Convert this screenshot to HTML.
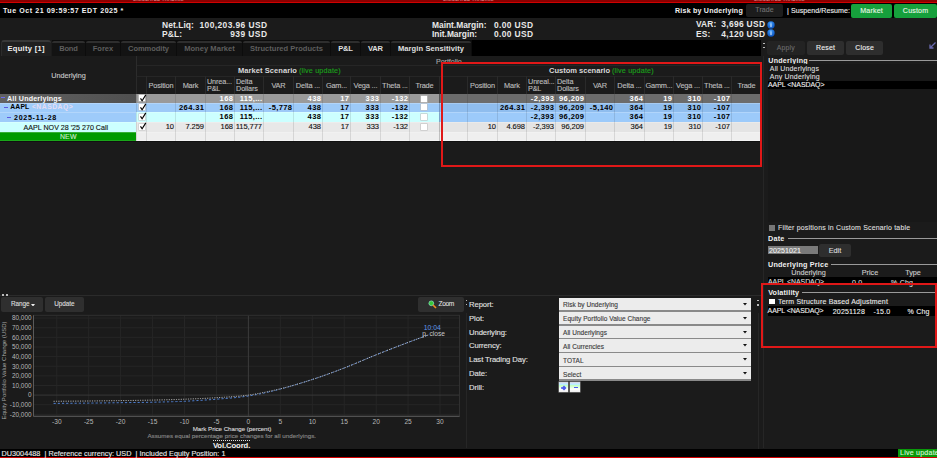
<!DOCTYPE html>
<html><head><meta charset="utf-8"><style>
html,body{margin:0;padding:0;background:#1b1b1b;width:937px;height:458px;overflow:hidden;}
.a{position:absolute;}
.t{font-family:"Liberation Sans",sans-serif;white-space:nowrap;}
.tn{-webkit-text-stroke:0.12px currentColor;}
.tb{}
</style></head><body>
<div class="a" style="left:0px;top:0px;width:937px;height:18px;background:#000;"></div>
<div class="a" style="left:0px;top:0px;width:937px;height:2px;background:#8a0000;"></div>
<div class="a" style="left:0px;top:2px;width:937px;height:1px;background:#d00000;"></div>
<div class="a t tn" style="left:133.00px;top:-2.18px;font-size:4.56px;line-height:4.56px;font-weight:normal;color:#d88;letter-spacing:0.153px;letter-spacing:0.2px;">SIMULATED TRADING</div>
<div class="a t tn" style="left:443.00px;top:-2.18px;font-size:4.56px;line-height:4.56px;font-weight:normal;color:#d88;letter-spacing:0.153px;letter-spacing:0.2px;">SIMULATED TRADING</div>
<div class="a t tn" style="left:754.00px;top:-2.18px;font-size:4.56px;line-height:4.56px;font-weight:normal;color:#d88;letter-spacing:0.153px;letter-spacing:0.2px;">SIMULATED TRADING</div>
<div class="a t tb" style="left:3.00px;top:7.95px;font-size:7.10px;line-height:7.10px;font-weight:bold;color:#f2f2f2;letter-spacing:0.538px;">Tue Oct 21 09:59:57 EDT 2025 *</div>
<div class="a t tb" style="left:675.00px;top:8.15px;font-size:7.10px;line-height:7.10px;font-weight:bold;color:#f2f2f2;letter-spacing:0.204px;">Risk by Underlying</div>
<div class="a" style="left:746px;top:4px;width:37px;height:13px;background:#1c1c1c;border-radius:2px;"></div>
<div class="a t tn" style="left:464.56px;width:600px;text-align:center;top:7.42px;font-size:6.96px;line-height:6.96px;font-weight:normal;color:#707070;letter-spacing:0.122px;">Trade</div>
<div class="a t tn" style="left:787.00px;top:7.95px;font-size:7.10px;line-height:7.10px;font-weight:normal;color:#eee;letter-spacing:0.048px;">| Suspend/Resume:</div>
<div class="a" style="left:851px;top:4px;width:41px;height:14px;background:#16a03c;border-radius:2px;"></div>
<div class="a t tn" style="left:571.58px;width:600px;text-align:center;top:7.65px;font-size:7.10px;line-height:7.10px;font-weight:normal;color:#e6f6e6;letter-spacing:0.151px;">Market</div>
<div class="a" style="left:894px;top:4px;width:43px;height:14px;background:#16a03c;border-radius:2px;"></div>
<div class="a t tn" style="left:615.58px;width:600px;text-align:center;top:7.65px;font-size:7.10px;line-height:7.10px;font-weight:normal;color:#e6f6e6;letter-spacing:0.169px;">Custom</div>
<div class="a" style="left:0px;top:18px;width:937px;height:22px;background:#1b1b1b;"></div>
<div class="a t tb" style="left:162.00px;top:20.60px;font-size:8.41px;line-height:8.41px;font-weight:bold;color:#e8e8e8;letter-spacing:0.086px;">Net.Liq:</div>
<div class="a t tb" style="right:669.59px;top:20.60px;font-size:8.41px;line-height:8.41px;font-weight:bold;color:#e8e8e8;letter-spacing:0.413px;">100,203.96 USD</div>
<div class="a t tb" style="left:162.00px;top:29.80px;font-size:8.41px;line-height:8.41px;font-weight:bold;color:#e8e8e8;letter-spacing:0.109px;">P&amp;L:</div>
<div class="a t tb" style="right:669.55px;top:29.80px;font-size:8.41px;line-height:8.41px;font-weight:bold;color:#e8e8e8;letter-spacing:0.453px;">939 USD</div>
<div class="a t tb" style="left:432.00px;top:20.60px;font-size:8.41px;line-height:8.41px;font-weight:bold;color:#e8e8e8;letter-spacing:-0.016px;">Maint.Margin:</div>
<div class="a t tb" style="right:403.62px;top:20.60px;font-size:8.41px;line-height:8.41px;font-weight:bold;color:#e8e8e8;letter-spacing:0.381px;">0.00 USD</div>
<div class="a t tb" style="left:432.00px;top:29.80px;font-size:8.41px;line-height:8.41px;font-weight:bold;color:#e8e8e8;letter-spacing:-0.013px;">Init.Margin:</div>
<div class="a t tb" style="right:403.62px;top:29.80px;font-size:8.41px;line-height:8.41px;font-weight:bold;color:#e8e8e8;letter-spacing:0.381px;">0.00 USD</div>
<div class="a t tb" style="left:696.00px;top:20.10px;font-size:8.41px;line-height:8.41px;font-weight:bold;color:#e8e8e8;letter-spacing:0.109px;">VAR:</div>
<div class="a t tb" style="right:171.68px;top:20.10px;font-size:8.41px;line-height:8.41px;font-weight:bold;color:#e8e8e8;letter-spacing:0.323px;">3,696 USD</div>
<div class="a t tb" style="left:696.00px;top:29.50px;font-size:8.41px;line-height:8.41px;font-weight:bold;color:#e8e8e8;letter-spacing:0.104px;">ES:</div>
<div class="a t tb" style="right:171.68px;top:29.50px;font-size:8.41px;line-height:8.41px;font-weight:bold;color:#e8e8e8;letter-spacing:0.323px;">4,120 USD</div>
<svg class="a" style="left:766.8px;top:20.60px" width="8" height="8" viewBox="0 0 8 8"><defs><radialGradient id="ig0" cx="0.45" cy="0.3" r="0.7"><stop offset="0" stop-color="#3a9cff"/><stop offset="1" stop-color="#0a4fb8"/></radialGradient></defs><circle cx="4" cy="4" r="3.7" fill="url(#ig0)"/><rect x="3.55" y="1.7" width="0.9" height="0.9" fill="#fff"/><rect x="3.55" y="3.1" width="0.9" height="3" fill="#fff"/></svg>
<svg class="a" style="left:766.8px;top:29.30px" width="8" height="8" viewBox="0 0 8 8"><defs><radialGradient id="ig1" cx="0.45" cy="0.3" r="0.7"><stop offset="0" stop-color="#3a9cff"/><stop offset="1" stop-color="#0a4fb8"/></radialGradient></defs><circle cx="4" cy="4" r="3.7" fill="url(#ig1)"/><rect x="3.55" y="1.7" width="0.9" height="0.9" fill="#fff"/><rect x="3.55" y="3.1" width="0.9" height="3" fill="#fff"/></svg>
<div class="a" style="left:0px;top:40px;width:937px;height:16px;background:#1b1b1b;"></div>
<div class="a" style="left:52px;top:40px;width:420px;height:16px;background:#0c0c0c;"></div>
<div class="a" style="left:1px;top:40px;width:50px;height:16px;background:#202020;border-top:2px solid #383838;border-left:1px solid #2c2c2c;border-radius:3px 3px 0 0;box-sizing:border-box;"></div>
<div class="a t tb" style="left:-273.86px;width:600px;text-align:center;top:44.93px;font-size:7.54px;line-height:7.54px;font-weight:bold;color:#f0f0f0;letter-spacing:0.289px;">Equity [1]</div>
<div class="a" style="left:52px;top:40.5px;width:33px;height:15.5px;background:#131313;border-top:2px solid #2e2e2e;border-radius:2px 2px 0 0;box-sizing:border-box;"></div>
<div class="a t tb" style="left:-231.61px;width:600px;text-align:center;top:44.93px;font-size:7.54px;line-height:7.54px;font-weight:bold;color:#5e5e5e;letter-spacing:-0.213px;">Bond</div>
<div class="a" style="left:86px;top:40.5px;width:34px;height:15.5px;background:#131313;border-top:2px solid #2e2e2e;border-radius:2px 2px 0 0;box-sizing:border-box;"></div>
<div class="a t tb" style="left:-197.00px;width:600px;text-align:center;top:44.93px;font-size:7.54px;line-height:7.54px;font-weight:bold;color:#5e5e5e;">Forex</div>
<div class="a" style="left:121px;top:40.5px;width:55px;height:15.5px;background:#131313;border-top:2px solid #2e2e2e;border-radius:2px 2px 0 0;box-sizing:border-box;"></div>
<div class="a t tb" style="left:-151.52px;width:600px;text-align:center;top:44.93px;font-size:7.54px;line-height:7.54px;font-weight:bold;color:#5e5e5e;letter-spacing:-0.047px;">Commodity</div>
<div class="a" style="left:177px;top:40.5px;width:65px;height:15.5px;background:#131313;border-top:2px solid #2e2e2e;border-radius:2px 2px 0 0;box-sizing:border-box;"></div>
<div class="a t tb" style="left:-90.48px;width:600px;text-align:center;top:44.93px;font-size:7.54px;line-height:7.54px;font-weight:bold;color:#5e5e5e;letter-spacing:0.039px;">Money Market</div>
<div class="a" style="left:243px;top:40.5px;width:87px;height:15.5px;background:#131313;border-top:2px solid #2e2e2e;border-radius:2px 2px 0 0;box-sizing:border-box;"></div>
<div class="a t tb" style="left:-13.50px;width:600px;text-align:center;top:44.93px;font-size:7.54px;line-height:7.54px;font-weight:bold;color:#5e5e5e;letter-spacing:0.010px;">Structured Products</div>
<div class="a" style="left:331px;top:40.5px;width:29px;height:15.5px;background:#131313;border-top:2px solid #2e2e2e;border-radius:2px 2px 0 0;box-sizing:border-box;"></div>
<div class="a t tb" style="left:45.39px;width:600px;text-align:center;top:44.93px;font-size:7.54px;line-height:7.54px;font-weight:bold;color:#e0e0e0;letter-spacing:-0.221px;">P&amp;L</div>
<div class="a" style="left:361px;top:40.5px;width:29px;height:15.5px;background:#131313;border-top:2px solid #2e2e2e;border-radius:2px 2px 0 0;box-sizing:border-box;"></div>
<div class="a t tb" style="left:75.44px;width:600px;text-align:center;top:44.93px;font-size:7.54px;line-height:7.54px;font-weight:bold;color:#e0e0e0;letter-spacing:-0.115px;">VAR</div>
<div class="a" style="left:391px;top:40.5px;width:80px;height:15.5px;background:#131313;border-top:2px solid #2e2e2e;border-radius:2px 2px 0 0;box-sizing:border-box;"></div>
<div class="a t tb" style="left:131.05px;width:600px;text-align:center;top:44.93px;font-size:7.54px;line-height:7.54px;font-weight:bold;color:#e0e0e0;letter-spacing:0.097px;">Margin Sensitivity</div>
<div class="a" style="left:472px;top:40px;width:289px;height:16px;background:#000;"></div>
<div class="a" style="left:767px;top:41.4px;width:37.5px;height:13.4px;background:#232323;border-radius:2px;"></div>
<div class="a t tn" style="left:485.84px;width:600px;text-align:center;top:44.63px;font-size:6.93px;line-height:6.93px;font-weight:normal;color:#6a6a6a;letter-spacing:0.188px;">Apply</div>
<div class="a" style="left:807px;top:41.4px;width:37px;height:13.4px;background:#2e2e2e;border-radius:2px;"></div>
<div class="a t tn" style="left:525.60px;width:600px;text-align:center;top:44.63px;font-size:6.93px;line-height:6.93px;font-weight:normal;color:#eee;letter-spacing:0.194px;">Reset</div>
<div class="a" style="left:846px;top:41.4px;width:37px;height:13.4px;background:#2e2e2e;border-radius:2px;"></div>
<div class="a t tn" style="left:564.60px;width:600px;text-align:center;top:44.63px;font-size:6.93px;line-height:6.93px;font-weight:normal;color:#eee;letter-spacing:0.191px;">Close</div>
<svg class="a" style="left:928px;top:41px" width="9" height="9" viewBox="0 0 9 9"><path d="M7.5 1.5 L2 7 M2 3.5 V7 H5.5" stroke="#6a6ab0" stroke-width="1.3" fill="none"/></svg>
<div class="a" style="left:763px;top:42.5px;width:1.6px;height:1.6px;background:#bbb;"></div>
<div class="a" style="left:763px;top:46.5px;width:1.6px;height:1.6px;background:#bbb;"></div>
<div class="a" style="left:0px;top:56px;width:761px;height:38px;background:#1b1b1b;"></div>
<div class="a" style="left:136px;top:56px;width:1px;height:38px;background:#2c2c2c;"></div>
<div class="a" style="left:137px;top:65px;width:624px;height:1px;background:#262626;"></div>
<div class="a" style="left:137px;top:75.5px;width:624px;height:1px;background:#262626;"></div>
<div class="a t tn" style="left:-231.52px;width:600px;text-align:center;top:71.68px;font-size:7.25px;line-height:7.25px;font-weight:normal;color:#c8c8c8;letter-spacing:-0.031px;">Underlying</div>
<div class="a t tn" style="left:436.00px;top:58.75px;font-size:7.10px;line-height:7.10px;font-weight:normal;color:#aaa;letter-spacing:-0.038px;">Portfolio</div>
<div class="a t tb" style="left:238.00px;top:67.23px;font-size:7.54px;line-height:7.54px;font-weight:bold;color:#d8d8d8;letter-spacing:0.054px;">Market Scenario</div>
<div class="a t tn" style="left:299.00px;top:67.39px;font-size:7.22px;line-height:7.22px;font-weight:normal;color:#1aa01a;letter-spacing:0.159px;">(live update)</div>
<div class="a t tb" style="left:549.00px;top:67.23px;font-size:7.54px;line-height:7.54px;font-weight:bold;color:#d8d8d8;letter-spacing:-0.007px;">Custom scenario</div>
<div class="a t tn" style="left:612.00px;top:67.39px;font-size:7.22px;line-height:7.22px;font-weight:normal;color:#1aa01a;letter-spacing:0.159px;">(live update)</div>
<div class="a" style="left:136px;top:75.5px;width:1px;height:18.5px;background:#2a2a2a;"></div>
<div class="a" style="left:146px;top:75.5px;width:1px;height:18.5px;background:#2a2a2a;"></div>
<div class="a" style="left:175px;top:75.5px;width:1px;height:18.5px;background:#2a2a2a;"></div>
<div class="a" style="left:205px;top:75.5px;width:1px;height:18.5px;background:#2a2a2a;"></div>
<div class="a" style="left:234px;top:75.5px;width:1px;height:18.5px;background:#2a2a2a;"></div>
<div class="a" style="left:263px;top:75.5px;width:1px;height:18.5px;background:#2a2a2a;"></div>
<div class="a" style="left:293px;top:75.5px;width:1px;height:18.5px;background:#2a2a2a;"></div>
<div class="a" style="left:322px;top:75.5px;width:1px;height:18.5px;background:#2a2a2a;"></div>
<div class="a" style="left:350px;top:75.5px;width:1px;height:18.5px;background:#2a2a2a;"></div>
<div class="a" style="left:380px;top:75.5px;width:1px;height:18.5px;background:#2a2a2a;"></div>
<div class="a" style="left:409px;top:75.5px;width:1px;height:18.5px;background:#2a2a2a;"></div>
<div class="a" style="left:439px;top:75.5px;width:1px;height:18.5px;background:#2a2a2a;"></div>
<div class="a t tn" style="left:-139.08px;width:600px;text-align:center;top:81.60px;font-size:7.39px;line-height:7.39px;font-weight:normal;color:#bdbdbd;letter-spacing:-0.168px;">Position</div>
<div class="a t tn" style="left:-109.60px;width:600px;text-align:center;top:81.60px;font-size:7.39px;line-height:7.39px;font-weight:normal;color:#bdbdbd;letter-spacing:-0.207px;">Mark</div>
<div class="a t tn" style="left:207.00px;top:77.68px;font-size:7.25px;line-height:7.25px;font-weight:normal;color:#bdbdbd;letter-spacing:-0.111px;">Unrea...</div>
<div class="a t tn" style="left:207.00px;top:85.38px;font-size:7.25px;line-height:7.25px;font-weight:normal;color:#bdbdbd;letter-spacing:-0.161px;">P&amp;L</div>
<div class="a t tn" style="left:236.00px;top:77.68px;font-size:7.25px;line-height:7.25px;font-weight:normal;color:#bdbdbd;letter-spacing:-0.119px;">Delta</div>
<div class="a t tn" style="left:236.00px;top:85.38px;font-size:7.25px;line-height:7.25px;font-weight:normal;color:#bdbdbd;letter-spacing:-0.109px;">Dollars</div>
<div class="a t tn" style="left:-21.62px;width:600px;text-align:center;top:81.60px;font-size:7.39px;line-height:7.39px;font-weight:normal;color:#bdbdbd;letter-spacing:-0.250px;">VAR</div>
<div class="a t tn" style="left:7.93px;width:600px;text-align:center;top:81.60px;font-size:7.39px;line-height:7.39px;font-weight:normal;color:#bdbdbd;letter-spacing:-0.144px;">Delta ...</div>
<div class="a t tn" style="left:36.41px;width:600px;text-align:center;top:81.60px;font-size:7.39px;line-height:7.39px;font-weight:normal;color:#bdbdbd;letter-spacing:-0.188px;">Gam...</div>
<div class="a t tn" style="left:65.42px;width:600px;text-align:center;top:81.60px;font-size:7.39px;line-height:7.39px;font-weight:normal;color:#bdbdbd;letter-spacing:-0.158px;">Vega ...</div>
<div class="a t tn" style="left:94.92px;width:600px;text-align:center;top:81.60px;font-size:7.39px;line-height:7.39px;font-weight:normal;color:#bdbdbd;letter-spacing:-0.153px;">Theta ...</div>
<div class="a t tn" style="left:124.40px;width:600px;text-align:center;top:81.60px;font-size:7.39px;line-height:7.39px;font-weight:normal;color:#bdbdbd;letter-spacing:-0.194px;">Trade</div>
<div class="a" style="left:439px;top:75.5px;width:1px;height:18.5px;background:#2a2a2a;"></div>
<div class="a" style="left:467px;top:75.5px;width:1px;height:18.5px;background:#2a2a2a;"></div>
<div class="a" style="left:497px;top:75.5px;width:1px;height:18.5px;background:#2a2a2a;"></div>
<div class="a" style="left:526px;top:75.5px;width:1px;height:18.5px;background:#2a2a2a;"></div>
<div class="a" style="left:555px;top:75.5px;width:1px;height:18.5px;background:#2a2a2a;"></div>
<div class="a" style="left:585px;top:75.5px;width:1px;height:18.5px;background:#2a2a2a;"></div>
<div class="a" style="left:614px;top:75.5px;width:1px;height:18.5px;background:#2a2a2a;"></div>
<div class="a" style="left:644px;top:75.5px;width:1px;height:18.5px;background:#2a2a2a;"></div>
<div class="a" style="left:673px;top:75.5px;width:1px;height:18.5px;background:#2a2a2a;"></div>
<div class="a" style="left:702px;top:75.5px;width:1px;height:18.5px;background:#2a2a2a;"></div>
<div class="a" style="left:731px;top:75.5px;width:1px;height:18.5px;background:#2a2a2a;"></div>
<div class="a" style="left:761px;top:75.5px;width:1px;height:18.5px;background:#2a2a2a;"></div>
<div class="a t tn" style="left:182.42px;width:600px;text-align:center;top:81.60px;font-size:7.39px;line-height:7.39px;font-weight:normal;color:#bdbdbd;letter-spacing:-0.168px;">Position</div>
<div class="a t tn" style="left:211.90px;width:600px;text-align:center;top:81.60px;font-size:7.39px;line-height:7.39px;font-weight:normal;color:#bdbdbd;letter-spacing:-0.207px;">Mark</div>
<div class="a t tn" style="left:528.00px;top:77.68px;font-size:7.25px;line-height:7.25px;font-weight:normal;color:#bdbdbd;letter-spacing:-0.104px;">Unreal...</div>
<div class="a t tn" style="left:528.00px;top:85.38px;font-size:7.25px;line-height:7.25px;font-weight:normal;color:#bdbdbd;letter-spacing:-0.161px;">P&amp;L</div>
<div class="a t tn" style="left:557.00px;top:77.68px;font-size:7.25px;line-height:7.25px;font-weight:normal;color:#bdbdbd;letter-spacing:-0.119px;">Delta</div>
<div class="a t tn" style="left:557.00px;top:85.38px;font-size:7.25px;line-height:7.25px;font-weight:normal;color:#bdbdbd;letter-spacing:-0.109px;">Dollars</div>
<div class="a t tn" style="left:299.88px;width:600px;text-align:center;top:81.60px;font-size:7.39px;line-height:7.39px;font-weight:normal;color:#bdbdbd;letter-spacing:-0.250px;">VAR</div>
<div class="a t tn" style="left:329.43px;width:600px;text-align:center;top:81.60px;font-size:7.39px;line-height:7.39px;font-weight:normal;color:#bdbdbd;letter-spacing:-0.144px;">Delta ...</div>
<div class="a t tn" style="left:358.90px;width:600px;text-align:center;top:81.60px;font-size:7.39px;line-height:7.39px;font-weight:normal;color:#bdbdbd;letter-spacing:-0.205px;">Gamm...</div>
<div class="a t tn" style="left:387.92px;width:600px;text-align:center;top:81.60px;font-size:7.39px;line-height:7.39px;font-weight:normal;color:#bdbdbd;letter-spacing:-0.158px;">Vega ...</div>
<div class="a t tn" style="left:416.92px;width:600px;text-align:center;top:81.60px;font-size:7.39px;line-height:7.39px;font-weight:normal;color:#bdbdbd;letter-spacing:-0.153px;">Theta ...</div>
<div class="a t tn" style="left:446.40px;width:600px;text-align:center;top:81.60px;font-size:7.39px;line-height:7.39px;font-weight:normal;color:#bdbdbd;letter-spacing:-0.194px;">Trade</div>
<div class="a" style="left:0px;top:94px;width:136px;height:9px;background:linear-gradient(to right,#626262,#505050);"></div>
<div class="a" style="left:0px;top:103px;width:136px;height:9px;background:#9ecbfa;"></div>
<div class="a" style="left:0px;top:112px;width:136px;height:10px;background:#9ecbfa;"></div>
<div class="a" style="left:0px;top:122px;width:136px;height:10px;background:#ccffff;"></div>
<div class="a" style="left:0px;top:132px;width:136px;height:9px;background:#009a00;"></div>
<div class="a" style="left:136px;top:94px;width:303px;height:9px;background:#9a9a9a;"></div>
<div class="a" style="left:439px;top:94px;width:322px;height:9px;background:#6c6c6c;"></div>
<div class="a" style="left:136px;top:103px;width:303px;height:9px;background:#9dcaf8;"></div>
<div class="a" style="left:439px;top:103px;width:322px;height:9px;background:#8fbdee;"></div>
<div class="a" style="left:136px;top:112px;width:303px;height:10px;background:#ccffff;"></div>
<div class="a" style="left:439px;top:112px;width:322px;height:10px;background:#9ccafa;"></div>
<div class="a" style="left:136px;top:122px;width:303px;height:10px;background:#e8e8e8;"></div>
<div class="a" style="left:439px;top:122px;width:322px;height:10px;background:#e4e4e4;"></div>
<div class="a" style="left:136px;top:132px;width:303px;height:9px;background:#eeeeee;"></div>
<div class="a" style="left:439px;top:132px;width:322px;height:9px;background:#efefef;"></div>
<div class="a" style="left:0px;top:103px;width:761px;height:1px;background:rgba(255,255,255,0.22);"></div>
<div class="a" style="left:0px;top:112px;width:761px;height:1px;background:rgba(255,255,255,0.22);"></div>
<div class="a" style="left:0px;top:122px;width:761px;height:1px;background:rgba(255,255,255,0.22);"></div>
<div class="a" style="left:0px;top:132px;width:761px;height:1px;background:rgba(255,255,255,0.22);"></div>
<div class="a" style="left:136px;top:140px;width:625px;height:1px;background:#f4f4f4;"></div>
<div class="a" style="left:0px;top:140px;width:136px;height:1px;background:#1aa61a;"></div>
<div class="a" style="left:0px;top:141px;width:761px;height:1px;background:#111;"></div>
<div class="a" style="left:136px;top:94px;width:1px;height:47px;background:rgba(0,0,0,0.1);"></div>
<div class="a" style="left:146px;top:94px;width:1px;height:47px;background:rgba(0,0,0,0.1);"></div>
<div class="a" style="left:175px;top:94px;width:1px;height:47px;background:rgba(0,0,0,0.1);"></div>
<div class="a" style="left:205px;top:94px;width:1px;height:47px;background:rgba(0,0,0,0.1);"></div>
<div class="a" style="left:234px;top:94px;width:1px;height:47px;background:rgba(0,0,0,0.1);"></div>
<div class="a" style="left:263px;top:94px;width:1px;height:47px;background:rgba(0,0,0,0.1);"></div>
<div class="a" style="left:293px;top:94px;width:1px;height:47px;background:rgba(0,0,0,0.1);"></div>
<div class="a" style="left:322px;top:94px;width:1px;height:47px;background:rgba(0,0,0,0.1);"></div>
<div class="a" style="left:350px;top:94px;width:1px;height:47px;background:rgba(0,0,0,0.1);"></div>
<div class="a" style="left:380px;top:94px;width:1px;height:47px;background:rgba(0,0,0,0.1);"></div>
<div class="a" style="left:409px;top:94px;width:1px;height:47px;background:rgba(0,0,0,0.1);"></div>
<div class="a" style="left:439px;top:94px;width:1px;height:47px;background:rgba(0,0,0,0.1);"></div>
<div class="a" style="left:439px;top:94px;width:1px;height:47px;background:rgba(0,0,0,0.1);"></div>
<div class="a" style="left:467px;top:94px;width:1px;height:47px;background:rgba(0,0,0,0.1);"></div>
<div class="a" style="left:497px;top:94px;width:1px;height:47px;background:rgba(0,0,0,0.1);"></div>
<div class="a" style="left:526px;top:94px;width:1px;height:47px;background:rgba(0,0,0,0.1);"></div>
<div class="a" style="left:555px;top:94px;width:1px;height:47px;background:rgba(0,0,0,0.1);"></div>
<div class="a" style="left:585px;top:94px;width:1px;height:47px;background:rgba(0,0,0,0.1);"></div>
<div class="a" style="left:614px;top:94px;width:1px;height:47px;background:rgba(0,0,0,0.1);"></div>
<div class="a" style="left:644px;top:94px;width:1px;height:47px;background:rgba(0,0,0,0.1);"></div>
<div class="a" style="left:673px;top:94px;width:1px;height:47px;background:rgba(0,0,0,0.1);"></div>
<div class="a" style="left:702px;top:94px;width:1px;height:47px;background:rgba(0,0,0,0.1);"></div>
<div class="a" style="left:731px;top:94px;width:1px;height:47px;background:rgba(0,0,0,0.1);"></div>
<div class="a" style="left:761px;top:94px;width:1px;height:47px;background:rgba(0,0,0,0.1);"></div>
<div class="a" style="left:0.7px;top:97.0px;width:4.2px;height:1.3px;background:#6a6af0;"></div>
<div class="a" style="left:4.1px;top:107.1px;width:3.9px;height:1.3px;background:#5a5ae0;"></div>
<div class="a" style="left:7.3px;top:116.6px;width:4.2px;height:1.3px;background:#5a5ae0;"></div>
<div class="a t tb" style="left:7.00px;top:95.95px;font-size:7.10px;line-height:7.10px;font-weight:bold;color:#fafafa;letter-spacing:0.199px;">All Underlyings</div>
<div class="a t tb" style="left:10.30px;top:104.09px;font-size:6.81px;line-height:6.81px;font-weight:bold;color:#000;letter-spacing:0.137px;">AAPL</div>
<div class="a t tb" style="left:31.90px;top:104.49px;font-size:6.81px;line-height:6.81px;font-weight:bold;color:#e6dcf2;letter-spacing:0.499px;">&lt;NASDAQ&gt;</div>
<div class="a t tb" style="left:14.00px;top:114.75px;font-size:7.10px;line-height:7.10px;font-weight:bold;color:#000;letter-spacing:0.711px;">2025-11-28</div>
<div class="a t tn" style="left:23.60px;top:124.55px;font-size:7.10px;line-height:7.10px;font-weight:normal;color:#111;letter-spacing:0.008px;">AAPL NOV 28 &#39;25 270 Call</div>
<div class="a t tn" style="left:-231.71px;width:600px;text-align:center;top:133.52px;font-size:6.96px;line-height:6.96px;font-weight:normal;color:#cfe9cf;letter-spacing:0.182px;">NEW</div>
<div class="a" style="left:139px;top:95px;width:6px;height:6px;background:#fff;box-shadow:0 0 0 0.6px #c8c8c8;"></div>
<svg class="a" style="left:138.5px;top:93.90px" width="8" height="8" viewBox="0 0 8 8"><path d="M1.5 4.4 L3.1 6.8 L6.8 0.9" stroke="#000" stroke-width="1.15" fill="none"/></svg>
<div class="a" style="left:139px;top:104px;width:6px;height:6px;background:#fff;box-shadow:0 0 0 0.6px #c8c8c8;"></div>
<svg class="a" style="left:138.5px;top:102.90px" width="8" height="8" viewBox="0 0 8 8"><path d="M1.5 4.4 L3.1 6.8 L6.8 0.9" stroke="#000" stroke-width="1.15" fill="none"/></svg>
<div class="a" style="left:139px;top:114px;width:6px;height:6px;background:#fff;box-shadow:0 0 0 0.6px #c8c8c8;"></div>
<svg class="a" style="left:138.5px;top:112.40px" width="8" height="8" viewBox="0 0 8 8"><path d="M1.5 4.4 L3.1 6.8 L6.8 0.9" stroke="#000" stroke-width="1.15" fill="none"/></svg>
<div class="a" style="left:139px;top:124px;width:6px;height:6px;background:#fff;box-shadow:0 0 0 0.6px #c8c8c8;"></div>
<svg class="a" style="left:138.5px;top:122.40px" width="8" height="8" viewBox="0 0 8 8"><path d="M1.5 4.4 L3.1 6.8 L6.8 0.9" stroke="#000" stroke-width="1.15" fill="none"/></svg>
<div class="a" style="left:421px;top:96px;width:6px;height:6px;background:#fff;box-shadow:0 0 0 0.6px #c0c0c0;"></div>
<div class="a" style="left:421px;top:104px;width:6px;height:6px;background:#fff;box-shadow:0 0 0 0.6px #c0c0c0;"></div>
<div class="a" style="left:421px;top:114px;width:6px;height:6px;background:#fff;box-shadow:0 0 0 0.6px #c0c0c0;"></div>
<div class="a" style="left:421px;top:124px;width:6px;height:6px;background:#fff;box-shadow:0 0 0 0.6px #c0c0c0;"></div>
<div class="a t tb" style="right:703.58px;top:95.43px;font-size:7.54px;line-height:7.54px;font-weight:bold;color:#fff;letter-spacing:0.422px;">168</div>
<div class="a t tb" style="right:674.70px;top:95.43px;font-size:7.54px;line-height:7.54px;font-weight:bold;color:#fff;letter-spacing:0.297px;">115,...</div>
<div class="a t tb" style="right:615.58px;top:95.43px;font-size:7.54px;line-height:7.54px;font-weight:bold;color:#fff;letter-spacing:0.422px;">438</div>
<div class="a t tb" style="right:587.58px;top:95.43px;font-size:7.54px;line-height:7.54px;font-weight:bold;color:#fff;letter-spacing:0.422px;">17</div>
<div class="a t tb" style="right:557.58px;top:95.43px;font-size:7.54px;line-height:7.54px;font-weight:bold;color:#fff;letter-spacing:0.422px;">333</div>
<div class="a t tb" style="right:528.62px;top:95.43px;font-size:7.54px;line-height:7.54px;font-weight:bold;color:#fff;letter-spacing:0.383px;">-132</div>
<div class="a t tb" style="right:732.61px;top:104.43px;font-size:7.54px;line-height:7.54px;font-weight:bold;color:#000;letter-spacing:0.391px;">264.31</div>
<div class="a t tb" style="right:703.58px;top:104.43px;font-size:7.54px;line-height:7.54px;font-weight:bold;color:#000;letter-spacing:0.422px;">168</div>
<div class="a t tb" style="right:674.70px;top:104.43px;font-size:7.54px;line-height:7.54px;font-weight:bold;color:#000;letter-spacing:0.297px;">115,...</div>
<div class="a t tb" style="right:644.64px;top:104.43px;font-size:7.54px;line-height:7.54px;font-weight:bold;color:#000;letter-spacing:0.362px;">-5,778</div>
<div class="a t tb" style="right:615.58px;top:104.43px;font-size:7.54px;line-height:7.54px;font-weight:bold;color:#000;letter-spacing:0.422px;">438</div>
<div class="a t tb" style="right:587.58px;top:104.43px;font-size:7.54px;line-height:7.54px;font-weight:bold;color:#000;letter-spacing:0.422px;">17</div>
<div class="a t tb" style="right:557.58px;top:104.43px;font-size:7.54px;line-height:7.54px;font-weight:bold;color:#000;letter-spacing:0.422px;">333</div>
<div class="a t tb" style="right:528.62px;top:104.43px;font-size:7.54px;line-height:7.54px;font-weight:bold;color:#000;letter-spacing:0.383px;">-132</div>
<div class="a t tb" style="right:703.58px;top:113.43px;font-size:7.54px;line-height:7.54px;font-weight:bold;color:#000;letter-spacing:0.422px;">168</div>
<div class="a t tb" style="right:674.70px;top:113.43px;font-size:7.54px;line-height:7.54px;font-weight:bold;color:#000;letter-spacing:0.297px;">115,...</div>
<div class="a t tb" style="right:615.58px;top:113.43px;font-size:7.54px;line-height:7.54px;font-weight:bold;color:#000;letter-spacing:0.422px;">438</div>
<div class="a t tb" style="right:587.58px;top:113.43px;font-size:7.54px;line-height:7.54px;font-weight:bold;color:#000;letter-spacing:0.422px;">17</div>
<div class="a t tb" style="right:557.58px;top:113.43px;font-size:7.54px;line-height:7.54px;font-weight:bold;color:#000;letter-spacing:0.422px;">333</div>
<div class="a t tb" style="right:528.62px;top:113.43px;font-size:7.54px;line-height:7.54px;font-weight:bold;color:#000;letter-spacing:0.383px;">-132</div>
<div class="a t tn" style="right:763.08px;top:123.43px;font-size:7.54px;line-height:7.54px;font-weight:normal;color:#111;letter-spacing:-0.078px;">10</div>
<div class="a t tn" style="right:733.07px;top:123.43px;font-size:7.54px;line-height:7.54px;font-weight:normal;color:#111;letter-spacing:-0.072px;">7.259</div>
<div class="a t tn" style="right:704.08px;top:123.43px;font-size:7.54px;line-height:7.54px;font-weight:normal;color:#111;letter-spacing:-0.078px;">168</div>
<div class="a t tn" style="right:675.07px;top:123.43px;font-size:7.54px;line-height:7.54px;font-weight:normal;color:#111;letter-spacing:-0.071px;">115,777</div>
<div class="a t tn" style="right:616.08px;top:123.43px;font-size:7.54px;line-height:7.54px;font-weight:normal;color:#111;letter-spacing:-0.078px;">438</div>
<div class="a t tn" style="right:588.08px;top:123.43px;font-size:7.54px;line-height:7.54px;font-weight:normal;color:#111;letter-spacing:-0.078px;">17</div>
<div class="a t tn" style="right:558.08px;top:123.43px;font-size:7.54px;line-height:7.54px;font-weight:normal;color:#111;letter-spacing:-0.078px;">333</div>
<div class="a t tn" style="right:529.07px;top:123.43px;font-size:7.54px;line-height:7.54px;font-weight:normal;color:#111;letter-spacing:-0.070px;">-132</div>
<div class="a t tb" style="right:382.64px;top:95.43px;font-size:7.54px;line-height:7.54px;font-weight:bold;color:#fff;letter-spacing:0.362px;">-2,393</div>
<div class="a t tb" style="right:352.61px;top:95.43px;font-size:7.54px;line-height:7.54px;font-weight:bold;color:#fff;letter-spacing:0.391px;">96,209</div>
<div class="a t tb" style="right:293.58px;top:95.43px;font-size:7.54px;line-height:7.54px;font-weight:bold;color:#fff;letter-spacing:0.422px;">364</div>
<div class="a t tb" style="right:264.58px;top:95.43px;font-size:7.54px;line-height:7.54px;font-weight:bold;color:#fff;letter-spacing:0.422px;">19</div>
<div class="a t tb" style="right:235.58px;top:95.43px;font-size:7.54px;line-height:7.54px;font-weight:bold;color:#fff;letter-spacing:0.422px;">310</div>
<div class="a t tb" style="right:206.62px;top:95.43px;font-size:7.54px;line-height:7.54px;font-weight:bold;color:#fff;letter-spacing:0.383px;">-107</div>
<div class="a t tb" style="right:411.61px;top:104.43px;font-size:7.54px;line-height:7.54px;font-weight:bold;color:#000;letter-spacing:0.391px;">264.31</div>
<div class="a t tb" style="right:382.64px;top:104.43px;font-size:7.54px;line-height:7.54px;font-weight:bold;color:#000;letter-spacing:0.362px;">-2,393</div>
<div class="a t tb" style="right:352.61px;top:104.43px;font-size:7.54px;line-height:7.54px;font-weight:bold;color:#000;letter-spacing:0.391px;">96,209</div>
<div class="a t tb" style="right:323.64px;top:104.43px;font-size:7.54px;line-height:7.54px;font-weight:bold;color:#000;letter-spacing:0.362px;">-5,140</div>
<div class="a t tb" style="right:293.58px;top:104.43px;font-size:7.54px;line-height:7.54px;font-weight:bold;color:#000;letter-spacing:0.422px;">364</div>
<div class="a t tb" style="right:264.58px;top:104.43px;font-size:7.54px;line-height:7.54px;font-weight:bold;color:#000;letter-spacing:0.422px;">19</div>
<div class="a t tb" style="right:235.58px;top:104.43px;font-size:7.54px;line-height:7.54px;font-weight:bold;color:#000;letter-spacing:0.422px;">310</div>
<div class="a t tb" style="right:206.62px;top:104.43px;font-size:7.54px;line-height:7.54px;font-weight:bold;color:#000;letter-spacing:0.383px;">-107</div>
<div class="a t tb" style="right:382.64px;top:113.43px;font-size:7.54px;line-height:7.54px;font-weight:bold;color:#000;letter-spacing:0.362px;">-2,393</div>
<div class="a t tb" style="right:352.61px;top:113.43px;font-size:7.54px;line-height:7.54px;font-weight:bold;color:#000;letter-spacing:0.391px;">96,209</div>
<div class="a t tb" style="right:293.58px;top:113.43px;font-size:7.54px;line-height:7.54px;font-weight:bold;color:#000;letter-spacing:0.422px;">364</div>
<div class="a t tb" style="right:264.58px;top:113.43px;font-size:7.54px;line-height:7.54px;font-weight:bold;color:#000;letter-spacing:0.422px;">19</div>
<div class="a t tb" style="right:235.58px;top:113.43px;font-size:7.54px;line-height:7.54px;font-weight:bold;color:#000;letter-spacing:0.422px;">310</div>
<div class="a t tb" style="right:206.62px;top:113.43px;font-size:7.54px;line-height:7.54px;font-weight:bold;color:#000;letter-spacing:0.383px;">-107</div>
<div class="a t tn" style="right:441.08px;top:123.43px;font-size:7.54px;line-height:7.54px;font-weight:normal;color:#111;letter-spacing:-0.078px;">10</div>
<div class="a t tn" style="right:412.07px;top:123.43px;font-size:7.54px;line-height:7.54px;font-weight:normal;color:#111;letter-spacing:-0.072px;">4.698</div>
<div class="a t tn" style="right:383.07px;top:123.43px;font-size:7.54px;line-height:7.54px;font-weight:normal;color:#111;letter-spacing:-0.065px;">-2,393</div>
<div class="a t tn" style="right:353.07px;top:123.43px;font-size:7.54px;line-height:7.54px;font-weight:normal;color:#111;letter-spacing:-0.073px;">96,209</div>
<div class="a t tn" style="right:294.08px;top:123.43px;font-size:7.54px;line-height:7.54px;font-weight:normal;color:#111;letter-spacing:-0.078px;">364</div>
<div class="a t tn" style="right:265.08px;top:123.43px;font-size:7.54px;line-height:7.54px;font-weight:normal;color:#111;letter-spacing:-0.078px;">19</div>
<div class="a t tn" style="right:236.08px;top:123.43px;font-size:7.54px;line-height:7.54px;font-weight:normal;color:#111;letter-spacing:-0.078px;">310</div>
<div class="a t tn" style="right:207.07px;top:123.43px;font-size:7.54px;line-height:7.54px;font-weight:normal;color:#111;letter-spacing:-0.070px;">-107</div>
<div class="a" style="left:0px;top:142px;width:761px;height:153px;background:#1b1b1b;"></div>
<div class="a" style="left:441px;top:62px;width:321px;height:104.6px;border:2px solid #e01818;box-sizing:border-box;"></div>
<div class="a" style="left:763px;top:56px;width:174px;height:392px;background:#1b1b1b;"></div>
<div class="a" style="left:762.6px;top:56px;width:1px;height:392px;background:#262626;"></div>
<div class="a t tb" style="left:768.30px;top:58.05px;font-size:7.10px;line-height:7.10px;font-weight:bold;color:#f0f0f0;letter-spacing:0.261px;">Underlying</div>
<div class="a" style="left:809px;top:59.6px;width:128px;height:1px;background:#9a9a9a;"></div>
<div class="a" style="left:768px;top:64px;width:169px;height:158px;background:#181818;"></div>
<div class="a t tn" style="left:769.80px;top:66.32px;font-size:6.96px;line-height:6.96px;font-weight:normal;color:#ddd;letter-spacing:0.195px;">All Underlyings</div>
<div class="a t tn" style="left:769.80px;top:74.32px;font-size:6.96px;line-height:6.96px;font-weight:normal;color:#ddd;letter-spacing:0.212px;">Any Underlying</div>
<div class="a" style="left:768px;top:81px;width:169px;height:8px;background:#000;"></div>
<div class="a t tn" style="left:768.00px;top:81.92px;font-size:6.96px;line-height:6.96px;font-weight:normal;color:#eee;letter-spacing:-0.035px;">AAPL &lt;NASDAQ&gt;</div>
<div class="a" style="left:769px;top:225px;width:6px;height:6px;background:#777;"></div>
<div class="a t tn" style="left:778.00px;top:225.02px;font-size:6.96px;line-height:6.96px;font-weight:normal;color:#ddd;letter-spacing:0.191px;">Filter positions in Custom Scenario table</div>
<div class="a t tb" style="left:768.00px;top:234.59px;font-size:7.22px;line-height:7.22px;font-weight:bold;color:#f0f0f0;letter-spacing:0.203px;">Date</div>
<div class="a" style="left:788px;top:237.6px;width:149px;height:1px;background:#9a9a9a;"></div>
<div class="a" style="left:768px;top:246px;width:50px;height:8px;background:#7a7a7a;"></div>
<div class="a t tn" style="left:769.00px;top:248.05px;font-size:7.10px;line-height:7.10px;font-weight:normal;color:#f0f0f0;letter-spacing:0.055px;">20251021</div>
<div class="a" style="left:819px;top:244px;width:32px;height:13px;background:#2e2e2e;border-radius:2px;"></div>
<div class="a t tn" style="left:535.01px;width:600px;text-align:center;top:246.88px;font-size:7.25px;line-height:7.25px;font-weight:normal;color:#ddd;letter-spacing:0.020px;">Edit</div>
<div class="a t tb" style="left:768.00px;top:260.59px;font-size:7.22px;line-height:7.22px;font-weight:bold;color:#f0f0f0;letter-spacing:0.187px;">Underlying Price</div>
<div class="a" style="left:831px;top:263.8px;width:106px;height:1px;background:#9a9a9a;"></div>
<div class="a t tn" style="left:508.48px;width:600px;text-align:center;top:268.88px;font-size:7.25px;line-height:7.25px;font-weight:normal;color:#ccc;letter-spacing:-0.031px;">Underlying</div>
<div class="a t tn" style="left:569.99px;width:600px;text-align:center;top:268.88px;font-size:7.25px;line-height:7.25px;font-weight:normal;color:#ccc;letter-spacing:-0.028px;">Price</div>
<div class="a t tn" style="left:612.98px;width:600px;text-align:center;top:268.88px;font-size:7.25px;line-height:7.25px;font-weight:normal;color:#ccc;letter-spacing:-0.031px;">Type</div>
<div class="a" style="left:768px;top:277px;width:169px;height:6px;background:#000;"></div>
<div class="a t tn" style="left:768.00px;top:279.32px;font-size:6.96px;line-height:6.96px;font-weight:normal;color:#ddd;letter-spacing:-0.073px;">AAPL &lt;NASDAQ&gt;</div>
<div class="a t tn" style="left:852.00px;top:279.29px;font-size:7.03px;line-height:7.03px;font-weight:normal;color:#ddd;letter-spacing:0.172px;">0.0</div>
<div class="a t tn" style="left:891.00px;top:279.29px;font-size:7.03px;line-height:7.03px;font-weight:normal;color:#ddd;letter-spacing:0.225px;">% Chg</div>
<div class="a t tb" style="left:768.20px;top:288.69px;font-size:7.22px;line-height:7.22px;font-weight:bold;color:#f0f0f0;letter-spacing:0.153px;">Volatility</div>
<div class="a" style="left:802px;top:291.8px;width:135px;height:1px;background:#9a9a9a;"></div>
<div class="a" style="left:769px;top:299px;width:6px;height:5px;background:#fff;"></div>
<div class="a t tn" style="left:778.00px;top:299.22px;font-size:6.96px;line-height:6.96px;font-weight:normal;color:#e4e4e4;letter-spacing:0.210px;">Term Structure Based Adjustment</div>
<div class="a" style="left:768px;top:306px;width:167px;height:10px;background:#000;"></div>
<div class="a t tn" style="left:767.60px;top:307.82px;font-size:6.96px;line-height:6.96px;font-weight:normal;color:#eee;letter-spacing:-0.073px;">AAPL &lt;NASDAQ&gt;</div>
<div class="a t tn" style="left:832.70px;top:307.79px;font-size:7.03px;line-height:7.03px;font-weight:normal;color:#eee;letter-spacing:0.205px;">20251128</div>
<div class="a t tn" style="left:873.50px;top:307.79px;font-size:7.03px;line-height:7.03px;font-weight:normal;color:#eee;letter-spacing:0.172px;">-15.0</div>
<div class="a t tn" style="left:907.50px;top:307.79px;font-size:7.03px;line-height:7.03px;font-weight:normal;color:#eee;letter-spacing:0.225px;">% Chg</div>
<div class="a" style="left:761px;top:283px;width:176px;height:65.2px;border:2px solid #e01818;box-sizing:border-box;"></div>
<div class="a" style="left:0px;top:295px;width:761px;height:153px;background:#1b1b1b;"></div>
<div class="a" style="left:0px;top:294.5px;width:761px;height:1px;background:#2b2b2b;"></div>
<div class="a" style="left:2px;top:294px;width:1.6px;height:1.6px;background:#bbb;"></div>
<div class="a" style="left:6px;top:294px;width:1.6px;height:1.6px;background:#bbb;"></div>
<div class="a" style="left:1px;top:297px;width:42px;height:15px;background:#2f2f2f;border-radius:2px;"></div>
<div class="a t tn" style="left:10.90px;top:301.21px;font-size:6.38px;line-height:6.38px;font-weight:normal;color:#ddd;letter-spacing:-0.059px;">Range</div>
<svg class="a" style="left:30.5px;top:303.8px" width="4" height="2.6" viewBox="0 0 4 2.6"><path d="M0 0 H4 L2 2.6Z" fill="#eee"/></svg>
<div class="a" style="left:45px;top:297px;width:39px;height:15px;background:#2f2f2f;border-radius:2px;"></div>
<div class="a t tn" style="left:-235.65px;width:600px;text-align:center;top:301.21px;font-size:6.38px;line-height:6.38px;font-weight:normal;color:#ddd;letter-spacing:-0.094px;">Update</div>
<div class="a" style="left:418px;top:297px;width:46px;height:15px;background:#2f2f2f;border-radius:2px;"></div>
<svg class="a" style="left:428px;top:300px" width="9" height="9" viewBox="0 0 9 9"><circle cx="3.3" cy="3.3" r="2.4" fill="#39c739" stroke="#9fd" stroke-width="0.6"/><path d="M5 5 L8 8" stroke="#f08a20" stroke-width="1.6"/></svg>
<div class="a t tn" style="left:438.50px;top:301.37px;font-size:6.67px;line-height:6.67px;font-weight:normal;color:#ddd;letter-spacing:-0.379px;">Zoom</div>
<svg class="a" style="left:0;top:312px" width="462" height="136" viewBox="0 312 462 136"><line x1="56.8" y1="315.3" x2="56.8" y2="416.3" stroke="#262626" stroke-width="1"/><line x1="88.7" y1="315.3" x2="88.7" y2="416.3" stroke="#262626" stroke-width="1"/><line x1="120.6" y1="315.3" x2="120.6" y2="416.3" stroke="#262626" stroke-width="1"/><line x1="152.6" y1="315.3" x2="152.6" y2="416.3" stroke="#262626" stroke-width="1"/><line x1="184.5" y1="315.3" x2="184.5" y2="416.3" stroke="#262626" stroke-width="1"/><line x1="216.5" y1="315.3" x2="216.5" y2="416.3" stroke="#262626" stroke-width="1"/><line x1="280.3" y1="315.3" x2="280.3" y2="416.3" stroke="#262626" stroke-width="1"/><line x1="312.3" y1="315.3" x2="312.3" y2="416.3" stroke="#262626" stroke-width="1"/><line x1="344.2" y1="315.3" x2="344.2" y2="416.3" stroke="#262626" stroke-width="1"/><line x1="376.2" y1="315.3" x2="376.2" y2="416.3" stroke="#262626" stroke-width="1"/><line x1="408.1" y1="315.3" x2="408.1" y2="416.3" stroke="#262626" stroke-width="1"/><line x1="440.0" y1="315.3" x2="440.0" y2="416.3" stroke="#262626" stroke-width="1"/><line x1="33.5" y1="414.3" x2="459.5" y2="414.3" stroke="#262626" stroke-width="1"/><line x1="33.5" y1="404.7" x2="459.5" y2="404.7" stroke="#262626" stroke-width="1"/><line x1="33.5" y1="385.5" x2="459.5" y2="385.5" stroke="#262626" stroke-width="1"/><line x1="33.5" y1="375.9" x2="459.5" y2="375.9" stroke="#262626" stroke-width="1"/><line x1="33.5" y1="366.2" x2="459.5" y2="366.2" stroke="#262626" stroke-width="1"/><line x1="33.5" y1="356.6" x2="459.5" y2="356.6" stroke="#262626" stroke-width="1"/><line x1="33.5" y1="347.0" x2="459.5" y2="347.0" stroke="#262626" stroke-width="1"/><line x1="33.5" y1="337.4" x2="459.5" y2="337.4" stroke="#262626" stroke-width="1"/><line x1="33.5" y1="327.8" x2="459.5" y2="327.8" stroke="#262626" stroke-width="1"/><line x1="33.5" y1="318.1" x2="459.5" y2="318.1" stroke="#262626" stroke-width="1"/><line x1="248.4" y1="315.3" x2="248.4" y2="416.3" stroke="#3c3c3c" stroke-width="1"/><line x1="33.5" y1="395.1" x2="459.5" y2="395.1" stroke="#383838" stroke-width="1"/><rect x="33.5" y="315.3" width="426.0" height="101.0" fill="none" stroke="#303030" stroke-width="1"/><line x1="33.5" y1="315.3" x2="33.5" y2="416.3" stroke="#5a5a5a" stroke-width="1"/><line x1="33.5" y1="416.3" x2="459.5" y2="416.3" stroke="#5a5a5a" stroke-width="1"/><text x="31.5" y="416.6" text-anchor="end" font-family="Liberation Sans" font-size="6.4" fill="#b8b8b8">-20,000</text><text x="31.5" y="407.0" text-anchor="end" font-family="Liberation Sans" font-size="6.4" fill="#b8b8b8">-10,000</text><text x="31.5" y="397.4" text-anchor="end" font-family="Liberation Sans" font-size="6.4" fill="#b8b8b8">0</text><text x="31.5" y="387.8" text-anchor="end" font-family="Liberation Sans" font-size="6.4" fill="#b8b8b8">10,000</text><text x="31.5" y="378.2" text-anchor="end" font-family="Liberation Sans" font-size="6.4" fill="#b8b8b8">20,000</text><text x="31.5" y="368.5" text-anchor="end" font-family="Liberation Sans" font-size="6.4" fill="#b8b8b8">30,000</text><text x="31.5" y="358.9" text-anchor="end" font-family="Liberation Sans" font-size="6.4" fill="#b8b8b8">40,000</text><text x="31.5" y="349.3" text-anchor="end" font-family="Liberation Sans" font-size="6.4" fill="#b8b8b8">50,000</text><text x="31.5" y="339.7" text-anchor="end" font-family="Liberation Sans" font-size="6.4" fill="#b8b8b8">60,000</text><text x="31.5" y="330.1" text-anchor="end" font-family="Liberation Sans" font-size="6.4" fill="#b8b8b8">70,000</text><text x="31.5" y="320.4" text-anchor="end" font-family="Liberation Sans" font-size="6.4" fill="#b8b8b8">80,000</text><text x="56.8" y="424" text-anchor="middle" font-family="Liberation Sans" font-size="6.6" fill="#b8b8b8">-30</text><text x="88.7" y="424" text-anchor="middle" font-family="Liberation Sans" font-size="6.6" fill="#b8b8b8">-25</text><text x="120.6" y="424" text-anchor="middle" font-family="Liberation Sans" font-size="6.6" fill="#b8b8b8">-20</text><text x="152.6" y="424" text-anchor="middle" font-family="Liberation Sans" font-size="6.6" fill="#b8b8b8">-15</text><text x="184.5" y="424" text-anchor="middle" font-family="Liberation Sans" font-size="6.6" fill="#b8b8b8">-10</text><text x="216.5" y="424" text-anchor="middle" font-family="Liberation Sans" font-size="6.6" fill="#b8b8b8">-5</text><text x="248.4" y="424" text-anchor="middle" font-family="Liberation Sans" font-size="6.6" fill="#b8b8b8">0</text><text x="280.3" y="424" text-anchor="middle" font-family="Liberation Sans" font-size="6.6" fill="#b8b8b8">5</text><text x="312.3" y="424" text-anchor="middle" font-family="Liberation Sans" font-size="6.6" fill="#b8b8b8">10</text><text x="344.2" y="424" text-anchor="middle" font-family="Liberation Sans" font-size="6.6" fill="#b8b8b8">15</text><text x="376.2" y="424" text-anchor="middle" font-family="Liberation Sans" font-size="6.6" fill="#b8b8b8">20</text><text x="408.1" y="424" text-anchor="middle" font-family="Liberation Sans" font-size="6.6" fill="#b8b8b8">25</text><text x="440.0" y="424" text-anchor="middle" font-family="Liberation Sans" font-size="6.6" fill="#b8b8b8">30</text><text transform="translate(6.0,370.5) rotate(-90)" text-anchor="middle" font-family="Liberation Sans" font-size="6.0" fill="#a8a8a8">Equity Portfolio Value Change (USD)</text><path d="M53.57 403.40 L56.30 403.38 L59.95 403.35 L64.31 403.31 L69.14 403.28 L74.21 403.23 L79.32 403.19 L84.22 403.14 L88.70 403.10 L92.85 403.06 L96.91 403.01 L100.91 402.96 L104.87 402.91 L108.80 402.86 L112.73 402.81 L116.67 402.76 L120.64 402.70 L124.63 402.65 L128.62 402.59 L132.62 402.54 L136.61 402.48 L140.60 402.42 L144.60 402.36 L148.59 402.28 L152.58 402.20 L156.57 402.11 L160.56 402.02 L164.56 401.92 L168.55 401.81 L172.54 401.70 L176.54 401.58 L180.53 401.44 L184.52 401.30 L188.51 401.07 L192.50 400.84 L196.50 400.60 L200.49 400.36 L204.48 400.09 L208.48 399.82 L212.47 399.52 L216.46 399.20 L220.45 398.88 L224.44 398.56 L228.44 398.24 L232.43 397.90 L236.42 397.52 L240.42 397.09 L244.41 396.58 L248.40 396.00 L252.39 395.34 L256.38 394.61 L260.38 393.82 L264.37 392.97 L268.36 392.07 L272.36 391.12 L276.35 390.13 L280.34 389.10 L284.33 388.02 L288.32 386.89 L292.32 385.70 L296.31 384.47 L300.30 383.28 L304.30 382.05 L308.29 380.79 L312.28 379.50 L316.27 378.18 L320.26 376.82 L324.26 375.42 L328.25 373.99 L332.24 372.53 L336.24 371.05 L340.23 369.53 L344.22 368.00 L348.21 366.43 L352.20 364.80 L356.20 363.14 L360.19 361.46 L364.18 359.77 L368.18 358.08 L372.17 356.42 L376.16 354.80 L380.23 353.18 L384.41 351.53 L388.64 349.88 L392.85 348.24 L396.96 346.66 L400.92 345.14 L404.66 343.71 L408.10 342.40 L411.35 341.18 L414.50 340.00 L417.51 338.90 L420.32 337.88 L422.88 336.95 L425.14 336.13 L427.04 335.45 L428.54 334.90" stroke="#4f7fd0" stroke-width="1" fill="none" stroke-dasharray="2.2 2"/><path d="M53.57 401.30 L56.30 401.28 L59.95 401.25 L64.31 401.21 L69.14 401.18 L74.21 401.13 L79.32 401.09 L84.22 401.04 L88.70 401.00 L92.85 400.96 L96.91 400.91 L100.91 400.86 L104.87 400.81 L108.80 400.76 L112.73 400.71 L116.67 400.66 L120.64 400.60 L124.63 400.55 L128.62 400.49 L132.62 400.44 L136.61 400.38 L140.60 400.32 L144.60 400.26 L148.59 400.18 L152.58 400.10 L156.57 400.01 L160.56 399.92 L164.56 399.82 L168.55 399.71 L172.54 399.60 L176.54 399.48 L180.53 399.34 L184.52 399.20 L188.51 399.05 L192.50 398.89 L196.50 398.73 L200.49 398.56 L204.48 398.37 L208.48 398.17 L212.47 397.94 L216.46 397.70 L220.45 397.45 L224.44 397.21 L228.44 396.97 L232.43 396.70 L236.42 396.39 L240.42 396.04 L244.41 395.61 L248.40 395.10 L252.39 394.51 L256.38 393.86 L260.38 393.14 L264.37 392.37 L268.36 391.54 L272.36 390.67 L276.35 389.76 L280.34 388.80 L284.33 387.80 L288.32 386.74 L292.32 385.63 L296.31 384.47 L300.30 383.28 L304.30 382.05 L308.29 380.79 L312.28 379.50 L316.27 378.18 L320.26 376.82 L324.26 375.42 L328.25 373.99 L332.24 372.53 L336.24 371.05 L340.23 369.53 L344.22 368.00 L348.21 366.43 L352.20 364.80 L356.20 363.14 L360.19 361.46 L364.18 359.77 L368.18 358.08 L372.17 356.42 L376.16 354.80 L380.23 353.18 L384.41 351.53 L388.64 349.88 L392.85 348.24 L396.96 346.66 L400.92 345.14 L404.66 343.71 L408.10 342.40 L411.35 341.18 L414.50 340.00 L417.51 338.90 L420.32 337.88 L422.88 336.95 L425.14 336.13 L427.04 335.45 L428.54 334.90" stroke="#c4c4c4" stroke-width="0.9" fill="none" stroke-dasharray="1.1 1.3"/><text x="432.3" y="329.6" text-anchor="middle" font-family="Liberation Sans" font-size="6.8" fill="#5f95e8">10:04</text><text x="433.5" y="335.5" text-anchor="middle" font-family="Liberation Sans" font-size="6.6" fill="#c8c8c8">p. close</text></svg>
<div class="a" style="left:757.3px;top:299.5px;width:1.6px;height:1.6px;background:#bbb;"></div>
<div class="a" style="left:757.3px;top:304px;width:1.6px;height:1.6px;background:#bbb;"></div>
<div class="a" style="left:758px;top:313px;width:1px;height:135.5px;background:#262626;"></div>
<div class="a" style="left:466px;top:313px;width:1px;height:135px;background:#262626;"></div>
<div class="a" style="left:465.5px;top:299.6px;width:1.6px;height:1.6px;background:#bbb;"></div>
<div class="a" style="left:465.5px;top:303.6px;width:1.6px;height:1.6px;background:#bbb;"></div>
<div class="a t tn" style="left:469.00px;top:300.86px;font-size:7.68px;line-height:7.68px;font-weight:normal;color:#e0e0e0;letter-spacing:-0.080px;">Report:</div>
<div class="a t tn" style="left:469.00px;top:314.72px;font-size:7.68px;line-height:7.68px;font-weight:normal;color:#e0e0e0;letter-spacing:-0.069px;">Plot:</div>
<div class="a t tn" style="left:469.00px;top:328.58px;font-size:7.68px;line-height:7.68px;font-weight:normal;color:#e0e0e0;letter-spacing:-0.080px;">Underlying:</div>
<div class="a t tn" style="left:469.00px;top:342.44px;font-size:7.68px;line-height:7.68px;font-weight:normal;color:#e0e0e0;letter-spacing:-0.083px;">Currency:</div>
<div class="a t tn" style="left:469.00px;top:356.30px;font-size:7.68px;line-height:7.68px;font-weight:normal;color:#e0e0e0;letter-spacing:-0.080px;">Last Trading Day:</div>
<div class="a t tn" style="left:469.00px;top:370.16px;font-size:7.68px;line-height:7.68px;font-weight:normal;color:#e0e0e0;letter-spacing:-0.081px;">Date:</div>
<div class="a t tn" style="left:469.00px;top:384.02px;font-size:7.68px;line-height:7.68px;font-weight:normal;color:#e0e0e0;letter-spacing:-0.057px;">Drill:</div>
<div class="a" style="left:559px;top:298px;width:192px;height:14px;background:#8a8a8a;"></div>
<div class="a" style="left:559px;top:298px;width:192px;height:12px;background:#ececec;"></div>
<div class="a t tn" style="left:563.00px;top:302.34px;font-size:6.52px;line-height:6.52px;font-weight:normal;color:#3a3a3a;letter-spacing:0.036px;">Risk by Underlying</div>
<svg class="a" style="left:742.6px;top:302.80px" width="4" height="3" viewBox="0 0 4 3"><path d="M0 0 H4 L2 2.6Z" fill="#111"/></svg>
<div class="a" style="left:559px;top:312px;width:192px;height:14px;background:#8a8a8a;"></div>
<div class="a" style="left:559px;top:312px;width:192px;height:12px;background:#ececec;"></div>
<div class="a t tn" style="left:563.00px;top:316.19px;font-size:6.52px;line-height:6.52px;font-weight:normal;color:#3a3a3a;letter-spacing:0.036px;">Equity Portfolio Value Change</div>
<svg class="a" style="left:742.6px;top:316.65px" width="4" height="3" viewBox="0 0 4 3"><path d="M0 0 H4 L2 2.6Z" fill="#111"/></svg>
<div class="a" style="left:559px;top:326px;width:192px;height:13px;background:#8a8a8a;"></div>
<div class="a" style="left:559px;top:326px;width:192px;height:12px;background:#ececec;"></div>
<div class="a t tn" style="left:563.00px;top:330.04px;font-size:6.52px;line-height:6.52px;font-weight:normal;color:#3a3a3a;letter-spacing:0.034px;">All Underlyings</div>
<svg class="a" style="left:742.6px;top:330.50px" width="4" height="3" viewBox="0 0 4 3"><path d="M0 0 H4 L2 2.6Z" fill="#111"/></svg>
<div class="a" style="left:559px;top:339px;width:192px;height:14px;background:#8a8a8a;"></div>
<div class="a" style="left:559px;top:339px;width:192px;height:13px;background:#ececec;"></div>
<div class="a t tn" style="left:563.00px;top:343.89px;font-size:6.52px;line-height:6.52px;font-weight:normal;color:#3a3a3a;letter-spacing:0.035px;">All Currencies</div>
<svg class="a" style="left:742.6px;top:344.35px" width="4" height="3" viewBox="0 0 4 3"><path d="M0 0 H4 L2 2.6Z" fill="#111"/></svg>
<div class="a" style="left:559px;top:353px;width:192px;height:14px;background:#8a8a8a;"></div>
<div class="a" style="left:559px;top:353px;width:192px;height:13px;background:#ececec;"></div>
<div class="a t tn" style="left:563.00px;top:357.74px;font-size:6.52px;line-height:6.52px;font-weight:normal;color:#3a3a3a;letter-spacing:0.047px;">TOTAL</div>
<svg class="a" style="left:742.6px;top:358.20px" width="4" height="3" viewBox="0 0 4 3"><path d="M0 0 H4 L2 2.6Z" fill="#111"/></svg>
<div class="a" style="left:559px;top:367px;width:192px;height:14px;background:#8a8a8a;"></div>
<div class="a" style="left:559px;top:367px;width:192px;height:12px;background:#ececec;"></div>
<div class="a t tn" style="left:563.00px;top:371.59px;font-size:6.52px;line-height:6.52px;font-weight:normal;color:#3a3a3a;letter-spacing:0.036px;">Select</div>
<svg class="a" style="left:742.6px;top:372.05px" width="4" height="3" viewBox="0 0 4 3"><path d="M0 0 H4 L2 2.6Z" fill="#111"/></svg>
<div class="a" style="left:559px;top:382px;width:9px;height:10px;background:linear-gradient(#d8d8d8 0%,#c8e4ff 15%,#b8f0ff 25%,#c6ffc6 35%,#d8ffd8 50%,#ffffff 70%,#eeeeee 100%);box-shadow:0 0 0 0.5px #999;"></div>
<div class="a" style="left:570px;top:382px;width:10px;height:10px;background:linear-gradient(#d8d8d8 0%,#c8e4ff 15%,#b8f0ff 25%,#c6ffc6 35%,#d8ffd8 50%,#ffffff 70%,#eeeeee 100%);box-shadow:0 0 0 0.5px #999;"></div>
<svg class="a" style="left:561px;top:384.5px" width="6" height="6" viewBox="0 0 6 6"><path d="M0.5 3 L3 0.5 L5.5 3 L3 5.5Z M0 2.2 H4 V3.8 H0Z" fill="#4a5af0"/></svg>
<div class="a" style="left:573.5px;top:386.8px;width:4.5px;height:1.6px;background:#4a5af0;"></div>
<div class="a t tn" style="left:-68.02px;width:600px;text-align:center;top:425.98px;font-size:6.23px;line-height:6.23px;font-weight:normal;color:#d8d8d8;letter-spacing:-0.050px;">Mark Price Change (percent)</div>
<div class="a t tn" style="left:-68.30px;width:600px;text-align:center;top:432.98px;font-size:6.23px;line-height:6.23px;font-weight:normal;color:#888;letter-spacing:0.010px;">Assumes equal percentage price changes for all underlyings.</div>
<div class="a t tb" style="left:-68.45px;width:600px;text-align:center;top:441.66px;font-size:7.68px;line-height:7.68px;font-weight:bold;color:#f4f4f4;letter-spacing:-0.092px;">Vol.Coord.</div>
<div class="a" style="left:213px;top:440px;width:37px;height:0;border-top:1px dotted #ddd"></div>
<div class="a" style="left:0px;top:449px;width:937px;height:9px;background:#000;"></div>
<div class="a" style="left:0px;top:457px;width:937px;height:1px;background:#d00000;"></div>
<div class="a t tn" style="left:1.50px;top:449.68px;font-size:7.25px;line-height:7.25px;font-weight:normal;color:#e8e8e8;letter-spacing:0.021px;">DU3004488 &nbsp;| Reference currency: USD &nbsp;| Included Equity Position: 1</div>
<div class="a" style="left:898px;top:449px;width:39px;height:8px;background:#0a990a;"></div>
<div class="a t tn" style="left:900.00px;top:450.45px;font-size:7.10px;line-height:7.10px;font-weight:normal;color:#d8f4d8;letter-spacing:0.210px;">Live update</div>
</body></html>
